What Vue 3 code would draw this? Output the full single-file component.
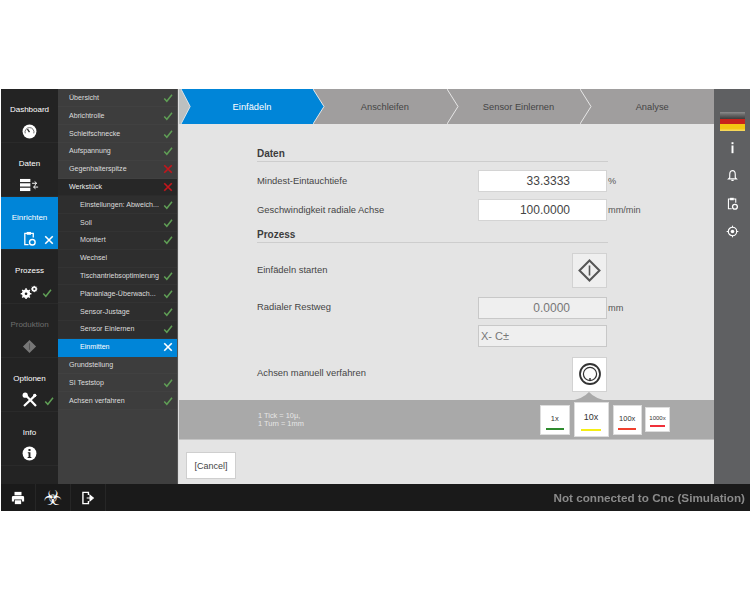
<template>
  <div class="screen">
    <div class="top">
      <nav class="mainnav">
        <div
          v-for="item in mainItems"
          :key="item.label"
          class="mainitem"
          :class="{ active: item.active, disabled: item.disabled }"
        >
          <span class="mainlabel">{{ item.label }}</span>
          <span class="mainicons">
            <svg v-if="item.icon === 'gauge'" class="ic" viewBox="0 0 16 16">
              <circle cx="8" cy="8" r="7.4" fill="#fff" />
              <path d="M3.4 10 A4.8 4.8 0 1 1 12.6 10" fill="none" stroke="#555" stroke-width="0.9" />
              <path d="M8 8.6 L5.8 5.4" stroke="#222" stroke-width="1.4" />
            </svg>
            <svg v-else-if="item.icon === 'data'" class="ic wide" viewBox="0 0 22 14">
              <rect x="0" y="0" width="12" height="3.6" fill="#fff" />
              <rect x="0" y="5" width="12" height="3.8" fill="#fff" />
              <rect x="0" y="10.2" width="12" height="3.8" fill="#fff" />
              <path d="M14 5 h5 M17 3 l2.4 2 -2.4 2 M21 9.4 h-5 M18 7.4 l-2.4 2 2.4 2" fill="none" stroke="#fff" stroke-width="1.1" />
            </svg>
            <svg v-else-if="item.icon === 'clipboard'" class="ic" viewBox="0 0 16 16">
              <path d="M7 2.5 H3 V14.5 H7 M9.5 2.5 H12 V7" fill="none" stroke="#fff" stroke-width="1.4" />
              <rect x="5" y="1" width="4.6" height="3" fill="#fff" />
              <circle cx="11" cy="12" r="3" fill="none" stroke="#fff" stroke-width="1.5" />
            </svg>
            <svg v-else-if="item.icon === 'gears'" class="ic wide" viewBox="0 0 22 16">
              <circle cx="7" cy="10" r="3.6" fill="none" stroke="#fff" stroke-width="2.4" />
              <path d="M7 3.6 V16 M.8 10 H13.2 M2.6 5.6 L11.4 14.4 M11.4 5.6 L2.6 14.4" stroke="#fff" stroke-width="1.8" />
              <circle cx="7" cy="10" r="1.5" fill="#222" />
              <circle cx="16.5" cy="4.5" r="2.3" fill="none" stroke="#fff" stroke-width="1.6" />
              <path d="M16.5 .8 V8.2 M12.8 4.5 H20.2 M13.9 1.9 L19.1 7.1 M19.1 1.9 L13.9 7.1" stroke="#fff" stroke-width="1" />
              <circle cx="16.5" cy="4.5" r="1.1" fill="#222" />
            </svg>
            <svg v-else-if="item.icon === 'diamond'" class="ic" viewBox="0 0 16 16">
              <path d="M8 1 L15 8 L8 15 L1 8 Z" fill="#777" />
              <path d="M8 4.5 V11.5" stroke="#555" stroke-width="1.2" />
            </svg>
            <svg v-else-if="item.icon === 'tools'" class="ic big" viewBox="0 0 16 16">
              <path d="M2 14 L14 2.6 M2.6 2 L14 14" stroke="#fff" stroke-width="2.2" />
              <circle cx="3.2" cy="3.2" r="2.6" fill="#fff" />
              <circle cx="12.6" cy="3.4" r="1.6" fill="#fff" />
            </svg>
            <svg v-else-if="item.icon === 'info'" class="ic" viewBox="0 0 16 16">
              <circle cx="8" cy="8" r="7.4" fill="#fff" />
              <rect x="6.9" y="3.2" width="2.2" height="2.2" fill="#222" />
              <path d="M6.2 6.6 H9 V11.6 H10 V12.8 H6 V11.6 H7 V7.8 H6.2 Z" fill="#222" />
            </svg>
            <svg v-if="item.state === 'ok'" class="state badge" viewBox="0 0 12 12"><path d="M1.5 6.5 L4.6 10 L10.8 2" class="okline" /></svg>
            <svg v-if="item.state === 'close'" class="state badge" viewBox="0 0 12 12"><path d="M1.5 1.5 L10.5 10.5 M10.5 1.5 L1.5 10.5" class="closeline" /></svg>
          </span>
        </div>
      </nav>

      <nav class="subnav">
        <div
          v-for="row in subItems"
          :key="row.label"
          class="subrow"
          :class="{ child: row.child, selected: row.selected, section: row.section }"
        >
          <span class="sublabel">{{ row.label }}</span>
          <svg v-if="row.state === 'ok'" class="state" viewBox="0 0 12 12"><path d="M1.5 6.5 L4.6 10 L10.8 2" class="okline" /></svg>
          <svg v-else-if="row.state === 'bad'" class="state" viewBox="0 0 12 12"><path d="M1.5 1.5 L10.5 10.5 M10.5 1.5 L1.5 10.5" class="badline" /></svg>
          <svg v-else-if="row.state === 'close'" class="state" viewBox="0 0 12 12"><path d="M1.5 1.5 L10.5 10.5 M10.5 1.5 L1.5 10.5" class="closeline" /></svg>
        </div>
      </nav>

      <main class="content">
        <div class="wizard">
          <div class="lead">
            <svg class="tip" viewBox="0 0 12 36" preserveAspectRatio="none">
              <path d="M0 0 L11 18 L0 36 Z" />
              <path d="M0 0 L11 18 L0 36" class="tipline" />
            </svg>
          </div>
          <div v-for="(step, i) in steps" :key="step" class="step" :class="{ current: i === 0 }">
            <span>{{ step }}</span>
            <svg v-if="i < steps.length - 1" class="tip" viewBox="0 0 12 36" preserveAspectRatio="none">
              <path d="M0 0 L11 18 L0 36 Z" />
              <path d="M0 0 L11 18 L0 36" class="tipline" />
            </svg>
          </div>
        </div>

        <div class="form">
          <h2 class="head first">Daten</h2>
          <div class="row">
            <label>Mindest-Eintauchtiefe</label>
            <div class="field">33.3333</div>
            <span class="unit">%</span>
          </div>
          <div class="row">
            <label>Geschwindigkeit radiale Achse</label>
            <div class="field">100.0000</div>
            <span class="unit">mm/min</span>
          </div>
          <h2 class="head">Prozess</h2>
          <div class="row actionrow start">
            <label>Einfädeln starten</label>
            <button class="square">
              <svg width="25" height="25" viewBox="0 0 25 25">
                <path d="M12.5 2.5 L22.5 12.5 L12.5 22.5 L2.5 12.5 Z" fill="none" stroke="#555" stroke-width="2" />
                <path d="M12.5 7.5 V17.5" stroke="#555" stroke-width="1.6" />
              </svg>
            </button>
          </div>
          <div class="row radial">
            <label>Radialer Restweg</label>
            <div class="field readonly">0.0000</div>
            <span class="unit">mm</span>
          </div>
          <div class="row axis">
            <span></span>
            <div class="field readonly left">X- C±</div>
          </div>
          <div class="row actionrow hand">
            <label>Achsen manuell verfahren</label>
            <button class="square white">
              <svg width="24" height="24" viewBox="0 0 24 24">
                <circle cx="12" cy="12" r="10" fill="none" stroke="#333" stroke-width="1.8" />
                <circle cx="12" cy="12" r="6.6" fill="none" stroke="#333" stroke-width="1.2" />
                <circle cx="12" cy="17" r="1" fill="#333" />
              </svg>
            </button>
          </div>
        </div>

        <div class="band">
          <svg class="notch" width="40" height="10" viewBox="0 0 40 10">
            <path d="M0 10 Q14 8 20 1 Q26 8 40 10 Z" fill="#a9a9a9" />
          </svg>
          <div class="ticks">1 Tick = 10µ,<br />1 Turn = 1mm</div>
          <div class="jogs">
            <button v-for="jog in jogs" :key="jog.label" class="jog" :class="jog.size">
              <span>{{ jog.label }}</span>
              <i :style="{ background: jog.color }"></i>
            </button>
          </div>
        </div>

        <div class="actions">
          <button class="cancel">[Cancel]</button>
        </div>
      </main>

      <aside class="rail">
        <div class="flag"></div>
        <svg class="railicon" viewBox="0 0 16 16">
          <rect x="6.8" y="1.5" width="2.4" height="2.4" fill="#fff" />
          <rect x="6.8" y="5.5" width="2.4" height="9.5" fill="#fff" />
        </svg>
        <svg class="railicon" viewBox="0 0 16 16">
          <path d="M8 2 C5 2 4.6 4.5 4.6 7 V10.5 L3 12.2 H13 L11.4 10.5 V7 C11.4 4.5 11 2 8 2 Z" fill="none" stroke="#fff" stroke-width="1.4" />
          <path d="M6.6 14 H9.4" stroke="#fff" stroke-width="1.6" />
        </svg>
        <svg class="railicon" viewBox="0 0 16 16">
          <path d="M7 2.5 H3 V14.5 H7 M9.5 2.5 H12 V7" fill="none" stroke="#fff" stroke-width="1.3" />
          <rect x="5" y="1" width="4.6" height="3" fill="#fff" />
          <circle cx="11" cy="12" r="3" fill="none" stroke="#fff" stroke-width="1.6" />
        </svg>
        <svg class="railicon" viewBox="0 0 16 16">
          <circle cx="8" cy="8" r="5.2" fill="none" stroke="#fff" stroke-width="1.4" />
          <circle cx="8" cy="8" r="2.2" fill="#fff" />
          <path d="M8 .8 V3 M8 13 V15.2 M.8 8 H3 M13 8 H15.2" stroke="#fff" stroke-width="1.2" />
        </svg>
      </aside>
    </div>

    <footer class="statusbar">
      <div class="tool">
        <svg width="14" height="14" viewBox="0 0 16 16">
          <path d="M4 1 H12 V5 H4 Z" fill="#fff" />
          <path d="M2.5 5.8 H13.5 Q15 5.8 15 7.5 V12 H12.5 V9.6 H3.5 V12 H1 V7.5 Q1 5.8 2.5 5.8 Z" fill="#fff" />
          <rect x="4.4" y="10.6" width="7.2" height="4.4" fill="#fff" />
        </svg>
      </div>
      <div class="tool bio">☣</div>
      <div class="tool">
        <svg width="14" height="14" viewBox="0 0 16 16">
          <path d="M8.5 4.5 V1.6 H2.2 V14.4 H8.5 V11.5" fill="none" stroke="#fff" stroke-width="1.6" />
          <path d="M6.5 8 H11 M10.4 5 L14 8 L10.4 11 Z" fill="#fff" stroke="#fff" stroke-width="1.4" />
        </svg>
      </div>
      <div class="status">Not connected to Cnc (Simulation)</div>
    </footer>
  </div>
</template>

<script setup>
const mainItems = [
  { label: "Dashboard", icon: "gauge" },
  { label: "Daten", icon: "data" },
  { label: "Einrichten", icon: "clipboard", state: "close", active: true },
  { label: "Prozess", icon: "gears", state: "ok" },
  { label: "Produktion", icon: "diamond", disabled: true },
  { label: "Optionen", icon: "tools", state: "ok" },
  { label: "Info", icon: "info" },
  { label: "Fehlerlog" },
];

const subItems = [
  { label: "Übersicht", state: "ok" },
  { label: "Abrichtrolle", state: "ok" },
  { label: "Schleifschnecke", state: "ok" },
  { label: "Aufspannung", state: "ok" },
  { label: "Gegenhalterspitze", state: "bad" },
  { label: "Werkstück", state: "bad", section: true },
  { label: "Einstellungen: Abweich...", state: "ok", child: true },
  { label: "Soll", state: "ok", child: true },
  { label: "Montiert", state: "ok", child: true },
  { label: "Wechsel", child: true },
  { label: "Tischantriebsoptimierung", state: "ok", child: true },
  { label: "Plananlage-Überwach...", state: "ok", child: true },
  { label: "Sensor-Justage", state: "ok", child: true },
  { label: "Sensor Einlernen", state: "ok", child: true },
  { label: "Einmitten", state: "close", child: true, selected: true },
  { label: "Grundstellung" },
  { label: "SI Teststop", state: "ok" },
  { label: "Achsen verfahren", state: "ok" },
];

const steps = ["Einfädeln", "Anschleifen", "Sensor Einlernen", "Analyse"];

const jogs = [
  { label: "1x", size: "md", color: "#2e8b2e" },
  { label: "10x", size: "lg", color: "#f5ee14" },
  { label: "100x", size: "md", color: "#f0402e" },
  { label: "1000x", size: "sm", color: "#f0303a" },
];
</script>

<style>
html,
body {
  background: #fff;
}
</style>

<style scoped>
.screen {
  margin: 89px 0 0 1px;
  width: 749px;
  height: 422px;
  display: flex;
  flex-direction: column;
  font-family: "Liberation Sans", Arial, sans-serif;
  filter: blur(0.45px);
  overflow: hidden;
}

.top {
  display: flex;
  height: 395px;
}

.mainnav {
  width: 57px;
  background: #232323;
  overflow: hidden;
  flex: none;
}

.mainitem {
  height: 53.8px;
  display: flex;
  flex-direction: column;
  align-items: center;
  box-sizing: border-box;
  padding-top: 16px;
  color: #fff;
  border-bottom: 1px solid #2a2a2a;
}

.mainitem.active {
  background: #0085d8;
}

.mainitem.disabled {
  color: #6e6e6e;
}

.mainlabel {
  font-size: 8px;
  line-height: 10px;
}

.mainicons {
  position: relative;
  display: flex;
  align-items: center;
  justify-content: center;
  height: 16px;
  margin-top: 8px;
}

.ic {
  width: 15px;
  height: 15px;
}

.ic.wide {
  width: 19px;
  height: 14px;
}

.ic.big {
  width: 16px;
  height: 16px;
}

.state {
  width: 10px;
  height: 10px;
  flex: none;
}

.badge {
  position: absolute;
  left: 22px;
  top: 4px;
}

.okline,
.badline,
.closeline {
  fill: none;
  stroke-width: 1.8;
}

.okline {
  stroke: #5f9e55;
}

.badline {
  stroke: #c3161c;
  stroke-width: 2;
}

.closeline {
  stroke: #fff;
  stroke-width: 1.9;
}

.subnav {
  width: 120px;
  flex: none;
  background: #3f3f3f;
  border-right: 1px solid #555;
  box-sizing: border-box;
  padding-top: 0.6px;
  overflow: hidden;
}

.subrow {
  height: 17.8px;
  display: flex;
  align-items: center;
  justify-content: space-between;
  box-sizing: border-box;
  padding: 0 4px 0 11px;
  color: #ddd;
  font-size: 7.1px;
  background: #3d3d3d;
  border-bottom: 1px solid #414141;
}

.subrow.section {
  background: #272727;
  border-bottom-color: #2b2b2b;
  color: #eee;
}

.subrow.child {
  background: #2e2e2e;
  border-bottom-color: #333;
  padding-left: 22px;
}

.subrow.selected {
  background: #0085d8;
  border-bottom-color: #0085d8;
  color: #fff;
}

.sublabel {
  white-space: nowrap;
}

.content {
  width: 536px;
  flex: none;
  background: #e4e4e4;
  border-left: 1px solid #dedede;
  box-sizing: border-box;
  position: relative;
  display: flex;
  flex-direction: column;
}

.wizard {
  display: flex;
  height: 35px;
  background: #a09e9e;
  color: #444;
  font-size: 9.3px;
}

.lead {
  width: 2px;
  background: #bcc0c0;
  flex: none;
  position: relative;
}

.lead .tip {
  width: 10px;
  z-index: 2;
}

.lead .tip path {
  fill: #bcc0c0;
}

.step {
  width: 133.7px;
  flex: none;
  position: relative;
  box-sizing: border-box;
  padding-left: 10px;
  display: flex;
  align-items: center;
  justify-content: center;
}

.step.current {
  width: 132px;
  background: #0085d8;
  color: #fff;
}

.tip {
  position: absolute;
  left: 100%;
  top: 0;
  width: 12px;
  height: 35px;
  z-index: 1;
}

.tip path {
  fill: #a09e9e;
}

.current .tip path {
  fill: #0085d8;
}

.tip .tipline,
.current .tip .tipline,
.lead .tip .tipline {
  fill: none;
  stroke: #e8e8e8;
  stroke-width: 1;
}

.form {
  margin-left: 78px;
  width: 430px;
  height: 276px;
  color: #444;
  font-size: 9.4px;
}

.head {
  width: 351px;
  box-sizing: border-box;
  margin: 0 0 8px;
  height: 16px;
  font-size: 10px;
  font-weight: bold;
  line-height: 16px;
  color: #3c3c3c;
  border-bottom: 1px solid #cdcdcd;
}

.head.first {
  margin-top: 22px;
}

.row {
  display: grid;
  grid-template-columns: 221px 129px auto;
  align-items: center;
  height: 22px;
  margin-bottom: 7px;
}

.row + .head {
  margin-top: -1px;
}

.row label {
  padding-bottom: 1px;
}

.start label {
  padding-bottom: 2px;
}

.radial label {
  padding-bottom: 3px;
}

.hand label {
  padding-bottom: 4px;
}

.field {
  height: 22px;
  box-sizing: border-box;
  border: 1px solid #d4d4d4;
  background: #fff;
  font-size: 12px;
  line-height: 20px;
  color: #444;
  text-align: right;
  padding-right: 36px;
}

.field.readonly {
  background: #efefef;
  border-color: #c8c8c8;
  color: #777;
}

.field.left {
  text-align: left;
  padding: 0 0 0 2px;
  font-size: 11px;
}

.unit {
  font-size: 9.2px;
  color: #555;
  padding-left: 1px;
}

.actionrow {
  height: 36px;
}

.start {
  margin-top: 9px;
  margin-bottom: 9px;
}

.hand {
  margin-top: 9px;
  margin-bottom: 0;
}

.axis {
  margin-bottom: 0;
  margin-top: -1px;
}

.radial {
  margin-bottom: 7px;
}

.square {
  grid-column: 2;
  justify-self: end;
  width: 35px;
  height: 35px;
  padding: 0;
  display: flex;
  align-items: center;
  justify-content: center;
  background: #efefef;
  border: 1px solid #d2d2d2;
}

.square.white {
  background: #fff;
}

.band {
  height: 40px;
  background: #a9a9a9;
  border-bottom: 1px solid #c4c4c4;
  box-sizing: border-box;
  position: relative;
  display: flex;
  align-items: center;
  justify-content: space-between;
  padding: 0 44px 0 79px;
}

.notch {
  position: absolute;
  left: 390px;
  top: -9px;
}

.ticks {
  font-size: 7.4px;
  line-height: 8px;
  color: #e6e6e6;
}

.jogs {
  display: flex;
  align-items: center;
  gap: 4px;
}

.jog {
  padding: 0;
  display: flex;
  flex-direction: column;
  align-items: center;
  justify-content: flex-end;
  background: #fff;
  border: 1px solid #ddd;
  box-sizing: border-box;
  font-family: inherit;
  color: #333;
}

.jog i {
  display: block;
  height: 2px;
}

.jog.md {
  width: 29.5px;
  height: 30px;
  font-size: 7.5px;
  padding-bottom: 4px;
}

.jog.md i {
  width: 18px;
  margin-top: 5px;
}

.jog.lg {
  width: 35px;
  height: 35px;
  font-size: 9px;
  padding-bottom: 5px;
}

.jog.lg i {
  width: 20px;
  height: 2.5px;
  margin-top: 7px;
}

.jog.sm {
  width: 25px;
  height: 25px;
  font-size: 6px;
  padding-bottom: 4px;
  margin-left: -1px;
}

.jog.sm i {
  width: 15px;
  margin-top: 4px;
}

.actions {
  flex: 1;
  padding: 12px 0 0 7px;
}

.cancel {
  width: 50px;
  height: 27px;
  padding: 0;
  background: #fff;
  border: 1px solid #cfcfcf;
  font-family: inherit;
  font-size: 9px;
  color: #444;
}

.rail {
  width: 36px;
  flex: none;
  background: #5f6062;
  display: flex;
  flex-direction: column;
  align-items: center;
  padding-top: 23px;
  box-sizing: border-box;
}

.flag {
  width: 25px;
  height: 19px;
  flex: none;
  background:
    linear-gradient(#8c8c8c 0, #6a6a6a 14%, #3e3e3e 36%, #c8231c 36% 62%, #f3c612 62% 86%, #f8dc6a 100%);
  margin-bottom: 10px;
}

.railicon {
  width: 13px;
  height: 13px;
  margin-bottom: 15px;
}

.statusbar {
  height: 27px;
  flex: none;
  background: #1a1a1a;
  display: flex;
  align-items: center;
}

.tool {
  width: 35px;
  height: 27px;
  flex: none;
  box-sizing: border-box;
  display: flex;
  align-items: center;
  justify-content: center;
  border-right: 1px solid #262626;
}

.bio {
  color: #fff;
  font-family: "DejaVu Sans", sans-serif;
  font-size: 21px;
}

.status {
  margin-left: auto;
  padding-right: 5px;
  font-size: 11.7px;
  font-weight: bold;
  color: #8b8b8b;
}
</style>
